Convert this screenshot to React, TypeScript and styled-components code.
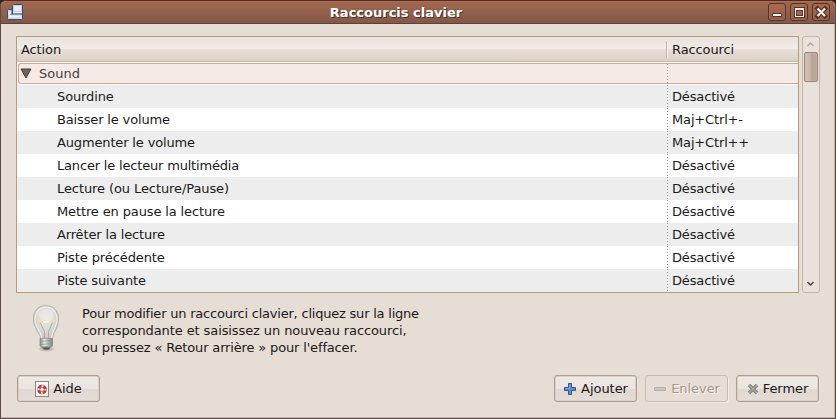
import React from "react";
import styled, { createGlobalStyle } from "styled-components";

const GlobalStyle = createGlobalStyle`
  * { box-sizing: border-box; }
  html, body { margin: 0; padding: 0; background: #e6ddd5; overflow: hidden; }
  body { font-family: "DejaVu Sans", sans-serif; font-size: 13px; color: #1a1a1a; }
`;

const Backdrop = styled.div`
  background: #2c2522;
  width: 836px;
  height: 419px;
`;

const Window = styled.div`
  display: flex;
  flex-direction: column;
  width: 836px;
  height: 419px;
  border: 1px solid #5d4c42;
  border-top-color: #47302a;
  border-radius: 6px 6px 0 0;
  background: #e6ddd5;
  overflow: hidden;
`;

const TitleBar = styled.header`
  display: grid;
  grid-template-columns: 66px 1fr 67px;
  align-items: start;
  flex: none;
  height: 23px;
  border-top: 1px solid #b8694c;
  border-bottom: 1px solid #5f4237;
  background: linear-gradient(#a0674f, #845846);
`;

const TitleIcon = styled.svg`
  display: block;
  width: 16px;
  height: 16px;
  margin: 2px 0 0 6px;
`;

const Title = styled.h1`
  margin: 3px 0 0;
  padding-right: 43px;
  text-align: center;
  font-size: 13px;
  line-height: 16px;
  font-weight: bold;
  color: #fff;
  text-shadow: 1px 1px 0 #4d342b;
`;

const WindowButtons = styled.div`
  display: flex;
  gap: 4px;
  padding-top: 1px;
`;

const WindowButton = styled.button`
  width: 18px;
  height: 18px;
  padding: 0;
  border: 1px solid #52352b;
  border-radius: 3px;
  background: linear-gradient(#b0694c, #8b5d4a);
  box-shadow: inset 0 0 0 1px #a3674f;
  svg { display: block; }
`;

const Content = styled.main`
  display: flex;
  flex-direction: column;
  flex: 1;
  padding: 12px 14px 0 15px;
  border-right: 1px solid #c8b4a3;
  border-bottom: 1px solid #c8b4a3;
`;

const ListArea = styled.div`
  display: flex;
  gap: 3px;
  height: 257px;
`;

const Table = styled.div`
  width: 783px;
  height: 257px;
  border: 1px solid #b39b86;
  background: #fff;
  overflow: hidden;
`;

const HeaderRow = styled.div`
  display: grid;
  grid-template-columns: 649px 1fr;
  align-items: center;
  height: 25px;
  border-bottom: 1px solid #c9b8aa;
  background: linear-gradient(#eae2dd 0, #f0ece8 12px, #e8e0da 12px, #ddd1c7 24px);
`;

const HeaderCell = styled.div<{ $divided?: boolean }>`
  height: 17px;
  line-height: 17px;
  padding-left: 4px;
  letter-spacing: -0.1px;
  ${(p) =>
    p.$divided &&
    "padding-left: 5px; border-left: 1px solid #c7b6a8; box-shadow: inset 1px 0 #f5f1ed;"}
`;

const Row = styled.div<{ $shade?: boolean }>`
  display: grid;
  grid-template-columns: 650px 1fr;
  height: 23px;
  line-height: 23px;
  background: ${(p) => (p.$shade ? "#ededed" : "#fff")};
`;

const GroupRow = styled(Row)`
  height: 21px;
  line-height: 19px;
  margin: 1px 0 1px 1px;
  grid-template-columns: 648px 1fr;
  border: 1px solid #d6a795;
  border-right: 0;
  border-radius: 3px 0 0 3px;
  background: #f5eae6;
  color: #4b403d;
`;

const GroupName = styled.div`
  display: flex;
  align-items: center;
  gap: 7px;
  padding-left: 1px;
`;

const ActionCell = styled.div<{ $tracking: number }>`
  padding-left: 40px;
  letter-spacing: ${(p) => p.$tracking}px;
`;

const ShortcutCell = styled.div`
  padding-left: 5px;
  letter-spacing: -0.15px;
  background: repeating-linear-gradient(#999 0 1px, transparent 1px 3px) 0 0 / 1px 100% no-repeat;
`;

const ScrollBar = styled.div`
  display: flex;
  flex-direction: column;
  width: 18px;
  height: 257px;
  border: 1px solid #c8b6a6;
  border-radius: 3px;
  background: #e9e2dc;
  svg { display: block; flex: none; }
`;

const Thumb = styled.div`
  flex: none;
  width: 14px;
  height: 30px;
  margin-left: 1px;
  border: 1px solid #98877b;
  border-radius: 2px;
  background: linear-gradient(90deg, #d3c4ba, #c5b3a6 50%, #b9a698 50%, #b9a698);
  box-shadow: inset 0 0 0 1px #c9b9ad80;
`;

const Spacer = styled.div`
  flex: 1;
`;

const Hint = styled.section`
  display: flex;
  height: 82px;
  padding: 12px 0 0 6px;
  svg { flex: none; }
`;

const HintText = styled.p`
  margin: 0 0 0 12px;
  line-height: 17px;
`;

const HintLine = styled.span<{ $tracking: number }>`
  display: block;
  letter-spacing: ${(p) => p.$tracking}px;
`;

const Actions = styled.footer`
  display: flex;
  gap: 8px;
  padding: 0 1px;
`;

const Button = styled.button`
  display: flex;
  align-items: center;
  justify-content: center;
  gap: 4px;
  width: 83px;
  height: 27px;
  padding: 0;
  border: 1px solid #ae9e92;
  border-radius: 3px;
  background: linear-gradient(#efe9e5, #ebe4df 50%, #e2d8d1 50%, #e5dcd6);
  box-shadow: inset 0 0 0 1px #dbd0c7;
  font: inherit;
  line-height: 17px;
  letter-spacing: -0.05px;
  color: #1a1a1a;
  svg { flex: none; }
  &:disabled {
    border-color: #cbbbaf;
    background: #e6ddd5;
    box-shadow: 1px 1px 0 #f1ebe5;
    color: #a69689;
    text-shadow: 1px 1px 0 #f8f5f2;
  }
`;

const AppIcon = () => (
  <TitleIcon viewBox="0 0 16 16">
    <path d="M.5 6.500q0-1 1-1H5V10h10.500v4.500q0 1-1 1h-13q-1 0-1-1z" fill="#d3d6d3" stroke="#28508f" />
    <path d="M5.500 1.500q0-1 1-1h8q1 0 1 1v8.500h-10z" fill="#cdd1ce" stroke="#28508f" />
    <path d="M7 2h7v5H7z" fill="#e9ebe7" />
    <path d="M6 8.500h9" stroke="#f2f3f0" />
    <path d="M1.500 7h2.500v4H1.500z" fill="#e3e5e2" />
    <path d="M2 12.500h12" stroke="#f1f2ef" strokeWidth="2" />
    <path d="M3 10.500h12" stroke="#7c93b5" />
  </TitleIcon>
);

const Bulb = () => (
  <svg width="48" height="48" viewBox="0 0 48 48">
    <defs>
      <radialGradient id="glass" cx=".5" cy=".4" r=".6">
        <stop offset="0" stopColor="#e9e4df" />
        <stop offset=".6" stopColor="#dcd8d3" />
        <stop offset="1" stopColor="#c4c4c0" />
      </radialGradient>
      <linearGradient id="metal">
        <stop offset="0" stopColor="#858985" />
        <stop offset=".35" stopColor="#eeefec" />
        <stop offset=".7" stopColor="#b3b7b2" />
        <stop offset="1" stopColor="#777b77" />
      </linearGradient>
      <radialGradient id="bulbShadow">
        <stop offset="0" stopColor="#4c3e34" stopOpacity=".5" />
        <stop offset="1" stopColor="#4c3e34" stopOpacity="0" />
      </radialGradient>
    </defs>
    <ellipse cx="24.500" cy="44" rx="9" ry="3" fill="url(#bulbShadow)" />
    <path d="M18.500 34c0-6-7-11-7-20C11.500 5.500 16.500 .7 24 .7S36.500 5.500 36.500 14c0 9-6 14-6 20z" fill="url(#glass)" stroke="#adb0ac" />
    <path d="M19.500 33c0-7-6.500-10-6.500-18.500C13 7 17.500 2.200 24 2.200S35 7 35 14.500C35 23 29.500 26 29.500 33" fill="none" stroke="#f1f0ed" strokeWidth="1.200" />
    <path d="M18 17.500l4.500 9v7M30.500 17.500l-4 9v7" fill="none" stroke="#a9a8a2" strokeWidth=".9" />
    <ellipse cx="24" cy="9.500" rx="8" ry="5.500" fill="#fff" opacity=".3" />
    <path d="M17.500 14.800q2.500 2.700 6.700 2.200t7-2.200" fill="none" stroke="#fffae0" strokeWidth="2" opacity=".8" />
    <path d="M17.500 14.800q1.500 1.700 3.500 2.100M27.500 16.900q2-.4 3.500-2.100" fill="none" stroke="#f1dc75" strokeWidth="1.300" />
    <path d="M18 33.500h12.500v7.500L28 42.500h-7.500L18 41z" fill="url(#metal)" stroke="#888c87" strokeWidth=".7" />
    <path d="M18 36.500l12.500-1M18 39.500l12.500-1M18.500 42l11.500-1" stroke="#8d918c" strokeWidth=".8" />
    <path d="M20 42.500h8.500l-2 2h-4z" fill="#4e524f" />
  </svg>
);

const HelpIcon = () => (
  <svg width="14" height="16" viewBox="0 0 14 16">
    <rect x=".5" y=".5" width="13" height="15" fill="#f7f7f5" stroke="#858883" />
    <circle cx="7" cy="8.500" r="4.500" fill="#fff" stroke="#8c8c88" strokeWidth=".8" />
    <circle cx="7" cy="8.500" r="3.500" fill="none" stroke="#e02323" strokeWidth="2.400" strokeDasharray="3.500 1.998" strokeDashoffset="-1" />
    <circle cx="7" cy="8.500" r="2" fill="#fff" stroke="#b03a3a" strokeWidth=".7" />
  </svg>
);

const PlusIcon = () => (
  <svg width="14" height="14" viewBox="0 0 14 14">
    <path d="M5.500 1.500h3v4h4v3h-4v4h-3v-4h-4v-3h4z" fill="#5f8ec8" stroke="#2d568f" strokeLinejoin="round" />
    <path d="M6.500 3v3.500H3" fill="none" stroke="#86abd8" />
  </svg>
);

const MinusIcon = () => (
  <svg width="14" height="14" viewBox="0 0 14 14">
    <rect x="1.500" y="5.500" width="11" height="3" rx=".5" fill="#c9c6c3" stroke="#b1aeab" />
  </svg>
);

const CrossIcon = () => (
  <svg width="12" height="12" viewBox="0 0 12 12">
    <path d="M2 2l8 8M10 2l-8 8" stroke="#777c76" strokeWidth="3.400" />
    <path d="M2 2l8 8M10 2l-8 8" stroke="#a9ada8" strokeWidth="1.500" />
  </svg>
);

const DISABLED = "Désactivé";
const shortcuts: [string, string, number][] = [
  ["Sourdine", DISABLED, -0.12],
  ["Baisser le volume", "Maj+Ctrl+-", -0.15],
  ["Augmenter le volume", "Maj+Ctrl++", -0.15],
  ["Lancer le lecteur multimédia", DISABLED, -0.18],
  ["Lecture (ou Lecture/Pause)", DISABLED, -0.09],
  ["Mettre en pause la lecture", DISABLED, -0.13],
  ["Arrêter la lecture", DISABLED, -0.15],
  ["Piste précédente", DISABLED, -0.09],
  ["Piste suivante", DISABLED, -0.14],
];

const hint: [string, number][] = [
  ["Pour modifier un raccourci clavier, cliquez sur la ligne", -0.215],
  ["correspondante et saisissez un nouveau raccourci,", -0.1],
  ["ou pressez « Retour arrière » pour l'effacer.", -0.155],
];

export default function App() {
  return (
    <Backdrop>
      <GlobalStyle />
      <Window>
        <TitleBar>
          <AppIcon />
          <Title>Raccourcis clavier</Title>
          <WindowButtons>
            <WindowButton aria-label="Réduire">
              <svg width="16" height="16"><path d="M3.500 9.500h9v3h-9z" fill="#f4efec" stroke="#52352b" /></svg>
            </WindowButton>
            <WindowButton aria-label="Agrandir">
              <svg width="16" height="16" shapeRendering="crispEdges">
                <rect x="3" y="3" width="11" height="11" fill="#52352b" />
                <rect x="4" y="4" width="9" height="9" fill="#f4efec" />
                <rect x="5" y="6" width="7" height="6" fill="#52352b" />
                <rect x="6" y="7" width="5" height="4" fill="#a0664f" />
              </svg>
            </WindowButton>
            <WindowButton aria-label="Fermer la fenêtre">
              <svg width="16" height="16">
                <path d="M4.500 4.500l7.500 7.500M12 4.500l-7.500 7.500" stroke="#52352b" strokeWidth="4.500" strokeLinecap="square" />
                <path d="M4.500 4.500l7.500 7.500M12 4.500l-7.500 7.500" stroke="#f4efec" strokeWidth="2.200" />
              </svg>
            </WindowButton>
          </WindowButtons>
        </TitleBar>
        <Content>
          <ListArea>
            <Table>
              <HeaderRow>
                <HeaderCell>Action</HeaderCell>
                <HeaderCell $divided>Raccourci</HeaderCell>
              </HeaderRow>
              <GroupRow>
                <GroupName>
                  <svg width="12" height="11"><path d="M1 1h10l-5 9z" fill="#71635e" stroke="#463d39" /></svg>
                  Sound
                </GroupName>
                <ShortcutCell />
              </GroupRow>
              {shortcuts.map(([action, keys, tracking], i) => (
                <Row key={action} $shade={i % 2 === 0}>
                  <ActionCell $tracking={tracking}>{action}</ActionCell>
                  <ShortcutCell>{keys}</ShortcutCell>
                </Row>
              ))}
            </Table>
            <ScrollBar>
              <svg width="16" height="15"><path d="M4.500 9l3-3 3 3" fill="none" stroke="#b9aa9e" strokeWidth="1.500" /></svg>
              <Thumb />
              <Spacer />
              <svg width="16" height="16"><path d="M4.500 6l3 3 3-3" fill="none" stroke="#4b4038" strokeWidth="1.500" /></svg>
            </ScrollBar>
          </ListArea>
          <Hint>
            <Bulb />
            <HintText>
              {hint.map(([line, tracking]) => (
                <HintLine key={line} $tracking={tracking}>{line}</HintLine>
              ))}
            </HintText>
          </Hint>
          <Actions>
            <Button><HelpIcon />Aide</Button>
            <Spacer />
            <Button><PlusIcon />Ajouter</Button>
            <Button disabled><MinusIcon />Enlever</Button>
            <Button><CrossIcon />Fermer</Button>
          </Actions>
        </Content>
      </Window>
    </Backdrop>
  );
}
